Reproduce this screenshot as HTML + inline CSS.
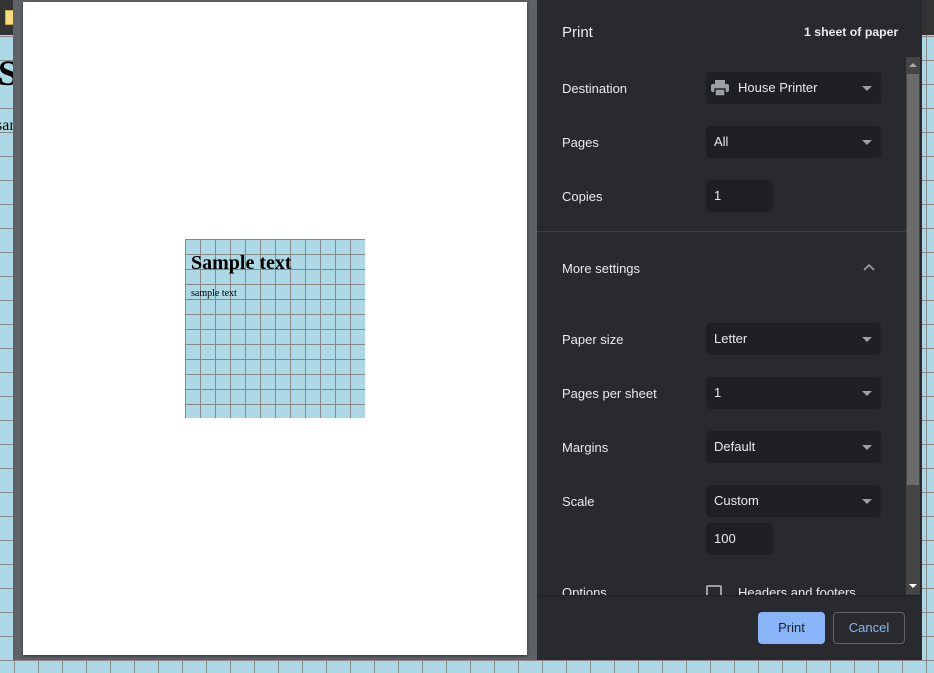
<!DOCTYPE html>
<html><head><style>
body{margin:0;width:934px;height:673px;overflow:hidden;position:relative;font-family:"Liberation Sans",sans-serif;
background-color:#add8e6;
background-image:linear-gradient(#888 1px,transparent 1px),linear-gradient(90deg,#888 1px,transparent 1px);
background-size:24px 24px;background-position:14px 12px;}
.abs{position:absolute}
.t{color:#e8eaed;font-size:13px}
.sel{position:absolute;left:706px;width:175px;height:32px;background:#1f2023;border-radius:4px;color:#e8eaed;font-size:13px;line-height:32px;box-sizing:border-box;padding-left:8px}
.sel:after{content:"";position:absolute;right:9px;top:14px;border-left:5px solid transparent;border-right:5px solid transparent;border-top:5px solid #9aa0a6}
.sel.n:after{display:none}
.lbl{position:absolute;left:562px;color:#e8eaed;font-size:13px}
</style></head><body>
<div class="abs" style="left:0;top:0;width:934px;height:35px;background:#333"></div>
<div class="abs" style="left:5px;top:10px;width:9px;height:13px;background:#f7dc7c;border:1px solid #c9a93e"></div>
<div class="abs" style="left:-2px;top:52px;font:bold 36px 'Liberation Serif',serif;color:#000">S</div>
<div class="abs" style="left:-4px;top:117px;font:16px 'Liberation Serif',serif;color:#000">sar</div>
<div class="abs" style="left:13px;top:0;width:909px;height:660px;background:#5f6368"></div>
<div class="abs" style="left:23px;top:2px;width:504px;height:653px;background:#fff;box-shadow:0 1px 3px rgba(0,0,0,.5)"></div>
<div class="abs" style="left:185px;top:239px;width:180px;height:179px;background-color:#add8e6;background-image:linear-gradient(#888 1px,transparent 1px),linear-gradient(90deg,#888 1px,transparent 1px);background-size:15px 15px"></div>
<div class="abs" style="left:191px;top:252px;font:bold 20px 'Liberation Serif',serif;color:#000">Sample text</div>
<div class="abs" style="left:191px;top:288px;font:10px 'Liberation Serif',serif;color:#000">sample text</div>
<div class="abs" style="left:537px;top:0;width:385px;height:660px;background:#292a2d"></div>
<div class="abs t" style="left:562px;top:24px;font-size:15px">Print</div>
<div class="abs t" style="left:804px;top:25px;font-weight:bold;font-size:12.3px">1 sheet of paper</div>
<div class="abs" style="left:906px;top:57px;width:14px;height:538px;background:#454545"></div>
<div class="abs" style="left:907px;top:74px;width:12px;height:411px;background:#6b6b6b"></div>
<div class="abs" style="left:909px;top:63px;border-left:4px solid transparent;border-right:4px solid transparent;border-bottom:4px solid #aaa"></div>
<div class="abs" style="left:909px;top:584px;border-left:4px solid transparent;border-right:4px solid transparent;border-top:4px solid #fff"></div>
<div class="lbl" style="top:81px">Destination</div>
<div class="sel" style="top:72px;padding-left:32px">House Printer</div>
<svg class="abs" style="left:711px;top:80px" width="18" height="16" viewBox="0 0 18 16"><rect x="4" y="0" width="10" height="4" fill="#9aa0a6"/><rect x="0" y="4" width="18" height="8" rx="2" fill="#9aa0a6"/><rect x="4" y="9" width="10" height="7" fill="#9aa0a6" stroke="#1f2023" stroke-width="1.5"/></svg>
<div class="lbl" style="top:135px">Pages</div>
<div class="sel" style="top:126px">All</div>
<div class="lbl" style="top:189px">Copies</div>
<div class="sel n" style="top:180px;width:67px">1</div>
<div class="abs" style="left:537px;top:231px;width:369px;height:1px;background:#3c4043"></div>
<div class="lbl" style="top:261px">More settings</div>
<svg class="abs" style="left:863px;top:264px" width="12" height="8"><path d="M1 6L6 1L11 6" stroke="#9aa0a6" stroke-width="1.6" fill="none"/></svg>
<div class="lbl" style="top:332px">Paper size</div>
<div class="sel" style="top:323px">Letter</div>
<div class="lbl" style="top:386px">Pages per sheet</div>
<div class="sel" style="top:377px">1</div>
<div class="lbl" style="top:440px">Margins</div>
<div class="sel" style="top:431px">Default</div>
<div class="lbl" style="top:494px">Scale</div>
<div class="sel" style="top:485px">Custom</div>
<div class="sel n" style="top:523px;width:67px">100</div>
<div class="abs" style="left:537px;top:580px;width:369px;height:15px;overflow:hidden">
<div class="abs t" style="left:25px;top:5px">Options</div>
<div class="abs" style="left:169px;top:5px;width:12px;height:12px;border:2px solid #9aa0a6;border-radius:2px"></div>
<div class="abs t" style="left:201px;top:5px">Headers and footers</div>
</div>
<div class="abs" style="left:537px;top:595px;width:385px;height:1px;background:#202124"></div>
<div class="abs" style="left:758px;top:612px;width:67px;height:32px;background:#8ab4f8;border-radius:4px;color:#202124;font-size:13px;line-height:32px;text-align:center">Print</div>
<div class="abs" style="left:833px;top:612px;width:72px;height:32px;box-sizing:border-box;border:1px solid #5f6368;border-radius:4px;color:#8ab4f8;font-size:13px;line-height:30px;text-align:center">Cancel</div>
</body></html>
